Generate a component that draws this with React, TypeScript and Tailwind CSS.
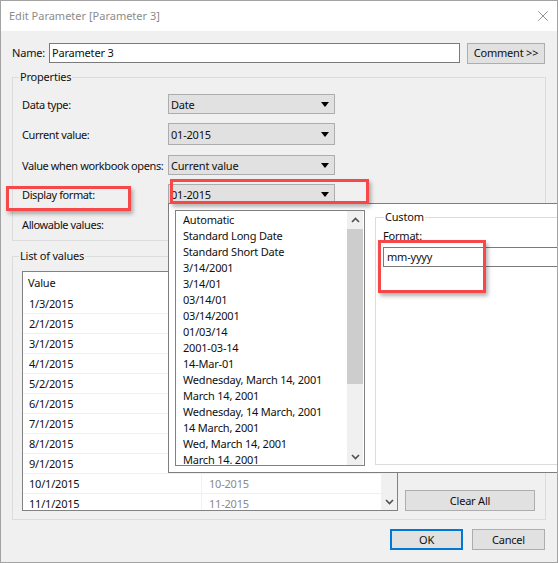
import { X } from 'lucide-react';

const formats = [
	'Automatic',
	'Standard Long Date',
	'Standard Short Date',
	'3/14/2001',
	'3/14/01',
	'03/14/01',
	'03/14/2001',
	'01/03/14',
	'2001-03-14',
	'14-Mar-01',
	'Wednesday, March 14, 2001',
	'March 14, 2001',
	'Wednesday, 14 March, 2001',
	'14 March, 2001',
	'Wed, March 14, 2001',
	'March 14. 2001',
];

const values = [
	['1/3/2015', '01-2015'],
	['2/1/2015', '02-2015'],
	['3/1/2015', '03-2015'],
	['4/1/2015', '04-2015'],
	['5/2/2015', '05-2015'],
	['6/1/2015', '06-2015'],
	['7/1/2015', '07-2015'],
	['8/1/2015', '08-2015'],
	['9/1/2015', '09-2015'],
	['10/1/2015', '10-2015'],
	['11/1/2015', '11-2015'],
];

const Arrow = () => (
	<svg width="8" height="5" viewBox="0 0 8 5" className="shrink-0">
		<path d="M0 0H8L4 5Z" fill="#000" />
	</svg>
);

const Chevron = ({ up }: { up?: boolean }) => (
	<svg width="9" height="6" viewBox="0 0 9 6" fill="none" stroke="#505050" strokeWidth="1.6">
		<path d={up ? 'M1 5L4.5 1.5L8 5' : 'M1 1L4.5 4.5L8 1'} />
	</svg>
);

const Combo = ({ value }: { value: string }) => (
	<div className="flex h-full w-[167px] items-center justify-between border border-[#adadad] bg-[#e1e1e1] pl-[2px] pr-[5px]">
		<span className="pt-[1px]">{value}</span>
		<Arrow />
	</div>
);

const Row = ({ label, value, className }: { label: string; value?: string; className: string }) => (
	<div className={`flex items-center ${className}`}>
		<span className="w-[146px] shrink-0 whitespace-nowrap pt-[1px] tracking-[-0.4px]">{label}</span>
		{value && <Combo value={value} />}
	</div>
);

const Button = ({ label, className }: { label: string; className: string }) => (
	<button className={`flex items-center justify-center border border-[#adadad] bg-[#e1e1e1] ${className}`}>
		{label}
	</button>
);

const Mark = ({ className }: { className: string }) => (
	<div className={`absolute border-[3px] border-[#f64848] shadow-[2px_3px_4px_rgba(0,0,0,0.3)] ${className}`}></div>
);

export default function App() {
	return (
		<div className="relative flex h-[563px] w-[558px] flex-col overflow-hidden border border-[#a3a3a3] bg-[#f0f0f0] font-['Noto_Sans',sans-serif] text-[11px] leading-[16px] tracking-[-0.2px] text-[#101010]">
			<div className="flex h-[30px] shrink-0 items-center justify-between bg-white pl-[8px] pr-[5px]">
				<span className="text-[11px] tracking-normal text-[#8c8c8c]">Edit Parameter [Parameter 3]</span>
				<X size={18} strokeWidth={1} className="text-[#707070]" />
			</div>

			<div className="flex flex-col px-[11px]">
				<div className="mt-[12px] flex h-[20px] items-center">
					<span className="w-[37px]">Name:</span>
					<div className="flex h-[20px] w-[411px] items-center border border-[#7a7a7a] bg-white px-[2px]">Parameter 3</div>
					<Button label="Comment >>" className="ml-[7px] h-[21px] w-[78px]" />
				</div>

				<fieldset className="mt-[6px] h-[172px] w-[534px] border border-[#dcdcdc] px-[9px]">
					<legend className="ml-[-3px] px-[1px]">Properties</legend>
					<Row label="Data type:" value="Date" className="mt-[9px] h-[20px]" />
					<Row label="Current value:" value="01-2015" className="mt-[9px] h-[22px]" />
					<Row label="Value when workbook opens:" value="Current value" className="mt-[10px] h-[20px]" />
					<Row label="Display format:" value="01-2015" className="mt-[9px] h-[20px]" />
					<Row label="Allowable values:" className="mt-[10px] h-[20px]" />
				</fieldset>

				<fieldset className="mt-[7px] h-[272px] w-[534px] border border-[#dcdcdc] px-[9px]">
					<legend className="ml-[-3px] px-[1px]">List of values</legend>
					<div className="flex items-end justify-between">
						<div className="mt-[7px] flex h-[240px] w-[376px] flex-col overflow-hidden border border-[#828282] bg-white">
							<div className="flex h-[22px] shrink-0 items-center pl-[5px]">Value</div>
							<div className="flex min-h-0 flex-1">
								<div className="min-w-0 flex-1">
									{values.map(([date, label]) => (
										<div key={date} className="flex h-[20px] border-b border-[#f0f0f0]">
											<span className="flex w-[179px] items-center border-r border-[#f0f0f0] pl-[6px]">{date}</span>
											<span className="flex flex-1 items-center pl-[7px] text-[#8a8a8a]">{label}</span>
										</div>
									))}
								</div>
								<div className="flex w-[16px] shrink-0 flex-col items-center justify-end bg-[#f0f0f0] pb-[5px]">
									<Chevron />
								</div>
							</div>
						</div>
						<Button label="Clear All" className="mr-[1px] h-[21px] w-[130px]" />
					</div>
				</fieldset>

				<div className="mt-[9px] flex justify-end gap-[9px] pr-[1px]">
					<Button label="OK" className="h-[21px] w-[73px] !border-2 !border-[#0078d7]" />
					<Button label="Cancel" className="h-[21px] w-[73px]" />
				</div>
			</div>

			{/* format dropdown sits over the dialog */}
			<div className="absolute left-[167px] top-[202px] flex h-[270px] w-[390px] gap-[10px] border border-[#7e7e7e] bg-white pl-[6px] pt-[6px]">
				<div className="flex h-[256px] w-[190px] shrink-0 overflow-hidden border border-[#828282] bg-white">
					<div className="min-w-0 flex-1 pl-[7px] pt-[1px]">
						{formats.map((f) => (
							<div key={f} className="h-[16px] whitespace-nowrap">{f}</div>
						))}
					</div>
					<div className="mr-[1px] flex w-[16px] flex-col bg-[#f0f0f0]">
						<div className="flex h-[18px] items-center justify-center"><Chevron up /></div>
						<div className="h-[155px] bg-[#cdcdcd]"></div>
						<div className="flex flex-1 items-end justify-center pb-[5px]"><Chevron /></div>
					</div>
				</div>
				<fieldset className="mt-[-1px] h-[256px] flex-1 border border-r-0 border-[#dcdcdc] pl-[7px]">
					<legend className="ml-[1px] px-[1px]">Custom</legend>
					<div className="mt-[3px] h-[16px]">Format:</div>
					<div className="mt-[3px] flex h-[20px] items-center border border-r-0 border-[#7a7a7a] pl-[3px]">mm-yyyy</div>
				</fieldset>
			</div>

			<Mark className="left-[5px] top-[185px] h-[25px] w-[125px]" />
			<Mark className="left-[169px] top-[178px] h-[25px] w-[199px]" />
			<Mark className="left-[377px] top-[239px] h-[53px] w-[108px]" />
		</div>
	);
}
